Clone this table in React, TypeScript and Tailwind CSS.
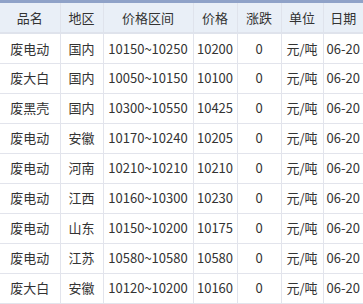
const cols = [
  { label: '品名', w: 'w-[60px]' },
  { label: '地区', w: 'w-[43px]' },
  { label: '价格区间', w: 'w-[90px]' },
  { label: '价格', w: 'w-[44px]' },
  { label: '涨跌', w: 'w-[44px]' },
  { label: '单位', w: 'w-[42px]' },
  { label: '日期', w: 'w-[40px]' },
];

const rows = [
  ['废电动', '国内', '10150~10250', '10200', '0', '元/吨', '06-20'],
  ['废大白', '国内', '10050~10150', '10100', '0', '元/吨', '06-20'],
  ['废黑壳', '国内', '10300~10550', '10425', '0', '元/吨', '06-20'],
  ['废电动', '安徽', '10170~10240', '10205', '0', '元/吨', '06-20'],
  ['废电动', '河南', '10210~10210', '10210', '0', '元/吨', '06-20'],
  ['废电动', '江西', '10160~10300', '10230', '0', '元/吨', '06-20'],
  ['废电动', '山东', '10150~10200', '10175', '0', '元/吨', '06-20'],
  ['废电动', '江苏', '10580~10580', '10580', '0', '元/吨', '06-20'],
  ['废大白', '安徽', '10120~10200', '10160', '0', '元/吨', '06-20'],
];

export default function App() {
  return (
    <div
      className="h-[304px] w-[363px] overflow-hidden bg-white text-[13px] text-[#333]"
      style={{ fontFamily: '"Noto Sans CJK SC", "Microsoft YaHei", sans-serif' }}
    >
      <div className="h-[3px] bg-[#8fa2c8]" />
      <table className="w-[363px] table-fixed border-collapse">
        <colgroup>
          {cols.map((c) => (
            <col key={c.label} className={c.w} />
          ))}
        </colgroup>
        <thead>
          <tr className="h-[30px] border-b-2 border-[#dfe3ec] bg-[#e9eff7]">
            {cols.map((c, i) => (
              <th
                key={c.label}
                className={`whitespace-nowrap p-0 text-center font-normal ${
                  i < cols.length - 1 ? 'border-r border-[#dfe3ec]' : ''
                }`}
              >
                {c.label}
              </th>
            ))}
          </tr>
        </thead>
        <tbody>
          {rows.map((r, ri) => (
            <tr key={ri} className="h-[30px] border-b border-[#e2e4ec]">
              {r.map((v, i) => (
                <td
                  key={i}
                  className={`whitespace-nowrap p-0 text-center ${
                    i < r.length - 1 ? 'border-r border-[#e2e4ec]' : ''
                  }`}
                >
                  {v}
                </td>
              ))}
            </tr>
          ))}
        </tbody>
      </table>
    </div>
  );
}
